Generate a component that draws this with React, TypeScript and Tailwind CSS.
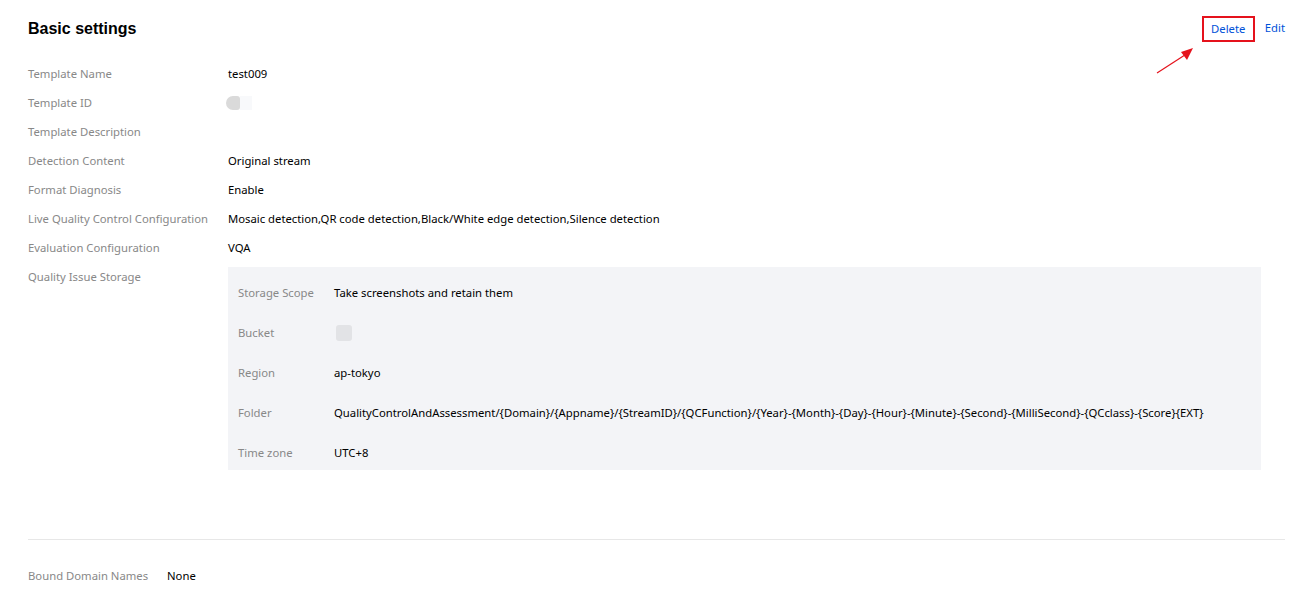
import React from "react";

const rows: { label: string; value?: React.ReactNode }[] = [
  { label: "Template Name", value: "test009" },
  {
    label: "Template ID",
    value: (
      <span className="flex h-5 items-center">
        <span className="block h-[14px] w-[14px] rounded-l-[7px] rounded-r-[3px] bg-[#dadada] ml-[-2px]" />
        <span className="block h-[14px] w-[12px] bg-[#f8f9fb]" />
      </span>
    ),
  },
  { label: "Template Description", value: "" },
  { label: "Detection Content", value: "Original stream" },
  { label: "Format Diagnosis", value: "Enable" },
  {
    label: "Live Quality Control Configuration",
    value: "Mosaic detection,QR code detection,Black/White edge detection,Silence detection",
  },
  { label: "Evaluation Configuration", value: "VQA" },
];

const inner: { label: string; value: React.ReactNode }[] = [
  { label: "Storage Scope", value: "Take screenshots and retain them" },
  {
    label: "Bucket",
    value: (
      <span className="flex h-5 items-center">
        <span className="block h-[16px] w-[16px] rounded-[3px] bg-[#e2e3e6] ml-[2px]" />
      </span>
    ),
  },
  { label: "Region", value: "ap-tokyo" },
  {
    label: "Folder",
    value:
      "QualityControlAndAssessment/{Domain}/{Appname}/{StreamID}/{QCFunction}/{Year}-{Month}-{Day}-{Hour}-{Minute}-{Second}-{MilliSecond}-{QCclass}-{Score}{EXT}",
  },
  { label: "Time zone", value: "UTC+8" },
];

export default function App() {
  return (
    <div
      className="relative h-[611px] w-[1314px] bg-white pl-[28px] pr-[29px] pt-[15px] text-[11.3px] text-[#000000]"
      style={{ fontFamily: '"Noto Sans", "Open Sans", sans-serif' }}
    >
      <div className="flex items-center justify-between">
        <h2 className="text-[16px] font-bold leading-[24px] text-[#000000]" style={{ fontFamily: '"Liberation Sans", Arial, sans-serif' }}>
          Basic settings
        </h2>
        <div className="flex items-center">
          <span className="mt-[1px] flex h-[26px] w-[53px] items-center justify-center border-2 border-[#e5121c] text-[#0052d9]">
            Delete
          </span>
          <span className="ml-[10px] text-[#0052d9]">Edit</span>
        </div>
      </div>

      <svg className="absolute left-[1150px] top-[42px]" width="50" height="40" viewBox="0 0 50 40">
        <line x1="7" y1="31" x2="38" y2="11" stroke="#e5121c" strokeWidth="1.2" />
        <polygon points="43,6 31,10 37,18" fill="#e5121c" />
      </svg>

      <div className="mt-[22px] flex flex-col gap-[9px]">
        {rows.map((r) => (
          <div key={r.label} className="flex leading-[20px]">
            <div className="w-[200px] shrink-0 text-[#888888]">{r.label}</div>
            <div className="text-[#000000]">{r.value}</div>
          </div>
        ))}
        <div className="flex leading-[20px]">
          <div className="w-[200px] shrink-0 text-[#888888]">Quality Issue Storage</div>
          <div className="mr-[24px] flex flex-1 flex-col gap-[20px] bg-[#f3f4f7] pb-[7px] pl-[10px] pt-[16px]">
            {inner.map((r) => (
              <div key={r.label} className="flex leading-[20px]">
                <div className="w-[96px] shrink-0 text-[#888888]">{r.label}</div>
                <div className="text-[#000000]">{r.value}</div>
              </div>
            ))}
          </div>
        </div>
      </div>

      <div className="mt-[69px] h-px bg-[#e7e7e7]" />

      <div className="mt-[26px] flex leading-[20px]">
        <div className="w-[139px] shrink-0 text-[#888888]">Bound Domain Names</div>
        <div className="text-[#000000]">None</div>
      </div>
    </div>
  );
}
